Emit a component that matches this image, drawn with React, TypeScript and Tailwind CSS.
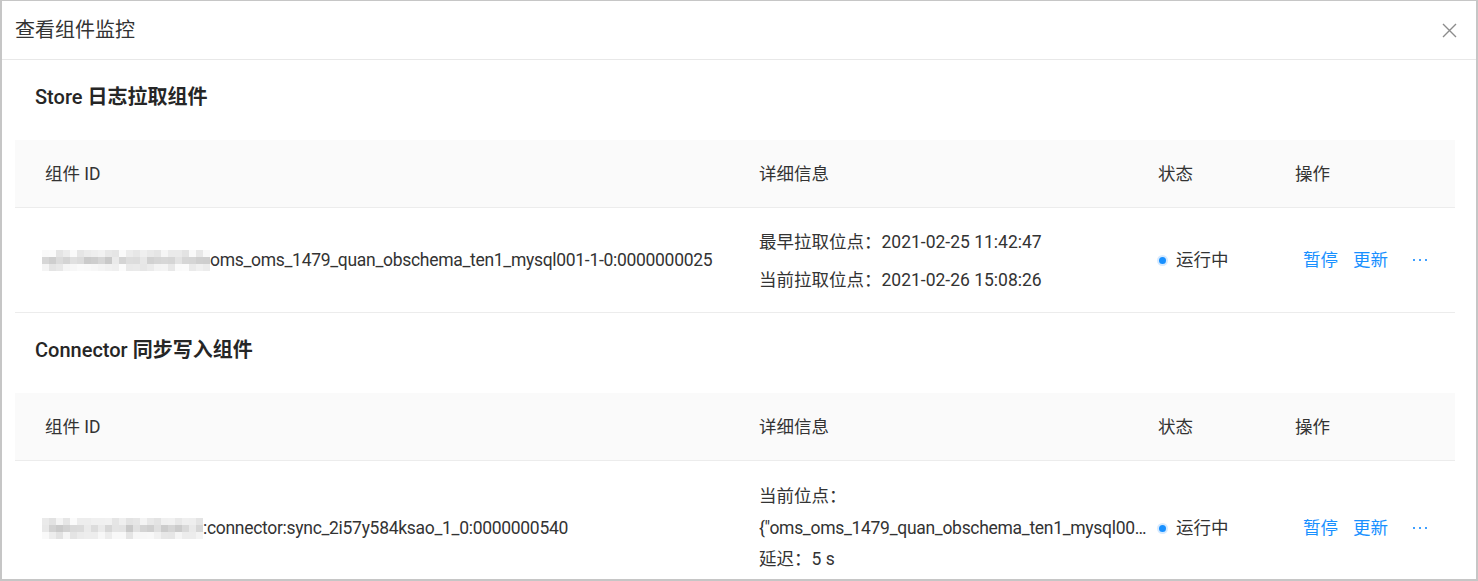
import React from "react";

const FONT = {
  fontFamily: 'Roboto, "Noto Sans CJK SC", "Microsoft YaHei", sans-serif',
};

// Pixelated redaction block drawn in front of masked component ids
function Mosaic({ cols, seed }: { cols: number; seed: number }) {
  const cells: React.ReactNode[] = [];
  let s = seed;
  const rnd = () => {
    s = (s * 9301 + 49297) % 233280;
    return s / 233280;
  };
  for (let r = 0; r < 3; r++) {
    for (let c = 0; c < cols; c++) {
      const base = r === 1 ? 200 : 226;
      const spread = r === 1 ? 34 : 26;
      const v = Math.round(base + rnd() * spread);
      cells.push(
        <rect
          key={`${r}-${c}`}
          x={c * 7}
          y={r * 7}
          width={7}
          height={7}
          fill={`rgb(${v},${v},${v})`}
        />
      );
    }
  }
  return (
    <svg width={cols * 7} height={21} className="shrink-0 block">
      {cells}
    </svg>
  );
}

function StatusRunning() {
  return (
    <div className="flex items-center">
      <span className="w-[11px] h-[11px] rounded-full bg-[#d6eaff] flex items-center justify-center ml-[7px]">
        <span className="w-[7px] h-[7px] rounded-full bg-[#1890ff]" />
      </span>
      <span className="ml-[8px] text-[#333]">运行中</span>
    </div>
  );
}

function Actions() {
  return (
    <div className="flex items-center pl-[38px] text-[#1890ff]">
      <span>暂停</span>
      <span className="ml-[15px]">更新</span>
      <span className="ml-[25px] flex items-center gap-[4px]">
        <span className="w-[2px] h-[2px] bg-[#40a0ff]" />
        <span className="w-[2px] h-[2px] bg-[#40a0ff]" />
        <span className="w-[2px] h-[2px] bg-[#40a0ff]" />
      </span>
    </div>
  );
}

function HeaderRow() {
  return (
    <div className="grid grid-cols-[714px_421px_115px_1fr] h-[68px] bg-[#fafafa] border-b border-[#ececec] items-center text-[#333]">
      <div className="pl-[30px] pt-[2px]">组件 ID</div>
      <div className="pl-[30px] pt-[2px]">详细信息</div>
      <div className="pl-[8px] pt-[2px]">状态</div>
      <div className="pl-[30px] pt-[2px]">操作</div>
    </div>
  );
}

function SectionTitle({ en, zh }: { en: string; zh: string }) {
  return (
    <div className="pl-[20px] pt-[22px] pb-[28px] leading-[30px] text-[20px] text-[#262626]">
      <span className="font-medium">{en} </span>
      <span className="font-bold">{zh}</span>
    </div>
  );
}

export default function App() {
  return (
    <div
      className="w-[1478px] h-[581px] bg-white border-t border-b-2 border-x-2 border-[#c6c6c6] overflow-hidden text-[17.5px] text-[#333]"
      style={FONT}
    >
      {/* dialog header */}
      <div className="h-[59px] flex items-center justify-between pl-[13px] pr-[19px] border-b border-[#e8e8e8]">
        <div className="text-[20px] text-[#333] leading-[28px]">查看组件监控</div>
        <svg width="15" height="15" viewBox="0 0 15 15" className="text-[#8c8c8c]">
          <path
            d="M1 1 L14 14 M14 1 L1 14"
            stroke="currentColor"
            strokeWidth="1.4"
            fill="none"
          />
        </svg>
      </div>

      <div className="pl-[13px] pr-[21px]">
        <SectionTitle en="Store" zh="日志拉取组件" />
        <HeaderRow />
        <div className="grid grid-cols-[714px_421px_115px_1fr] border-b border-[#ececec] items-center">
          <div className="pl-[27px] flex items-center">
            <Mosaic cols={24} seed={17} />
            <span className="whitespace-nowrap tracking-[-0.3px]">
              oms_oms_1479_quan_obschema_ten1_mysql001-1-0:0000000025
            </span>
          </div>
          <div className="pl-[30px] pt-[21px] pb-[19px] flex flex-col gap-[12px] leading-[26px]">
            <div>最早拉取位点：2021-02-25 11:42:47</div>
            <div>当前拉取位点：2021-02-26 15:08:26</div>
          </div>
          <StatusRunning />
          <Actions />
        </div>

        <SectionTitle en="Connector" zh="同步写入组件" />
        <HeaderRow />
        <div className="grid grid-cols-[714px_421px_115px_1fr] border-b border-[#ececec] items-center">
          <div className="pl-[27px] flex items-center">
            <Mosaic cols={23} seed={53} />
            <span className="whitespace-nowrap tracking-[-0.3px]">
              :connector:sync_2i57y584ksao_1_0:0000000540
            </span>
          </div>
          <div className="pl-[30px] pt-[20px] pb-[20px] flex flex-col leading-[31.5px]">
            <div>当前位点：</div>
            <div className="w-[391px] truncate tracking-[-0.3px]">
              {'{"oms_oms_1479_quan_obschema_ten1_mysql001-1-0":"1614323306"}'}
            </div>
            <div>延迟：5 s</div>
          </div>
          <StatusRunning />
          <Actions />
        </div>
      </div>
    </div>
  );
}
